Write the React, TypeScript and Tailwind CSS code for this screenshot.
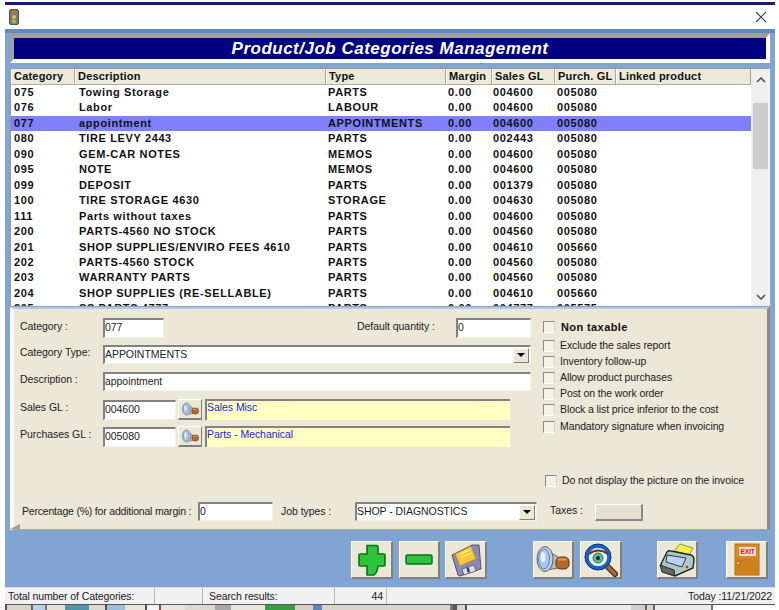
import React from "react";

const ROWS = [
  ["075", "Towing Storage", "PARTS", "0.00", "004600", "005080"],
  ["076", "Labor", "LABOUR", "0.00", "004600", "005080"],
  ["077", "appointment", "APPOINTMENTS", "0.00", "004600", "005080"],
  ["080", "TIRE LEVY 2443", "PARTS", "0.00", "002443", "005080"],
  ["090", "GEM-CAR NOTES", "MEMOS", "0.00", "004600", "005080"],
  ["095", "NOTE", "MEMOS", "0.00", "004600", "005080"],
  ["099", "DEPOSIT", "PARTS", "0.00", "001379", "005080"],
  ["100", "TIRE STORAGE 4630", "STORAGE", "0.00", "004630", "005080"],
  ["111", "Parts without taxes", "PARTS", "0.00", "004600", "005080"],
  ["200", "PARTS-4560 NO STOCK", "PARTS", "0.00", "004560", "005080"],
  ["201", "SHOP SUPPLIES/ENVIRO FEES 4610", "PARTS", "0.00", "004610", "005660"],
  ["202", "PARTS-4560 STOCK", "PARTS", "0.00", "004560", "005080"],
  ["203", "WARRANTY PARTS", "PARTS", "0.00", "004560", "005080"],
  ["204", "SHOP SUPPLIES (RE-SELLABLE)", "PARTS", "0.00", "004610", "005660"],
  ["205", "SS PARTS 4777", "PARTS", "0.00", "004777", "005575"],
];

const HEADERS: [string, string][] = [
  ["Category", "w-[64px]"],
  ["Description", "w-[251px]"],
  ["Type", "w-[120px]"],
  ["Margin", "w-[46px]"],
  ["Sales GL", "w-[63px]"],
  ["Purch. GL", "w-[61px]"],
  ["Linked product", "flex-1"],
];
const CELLS = ["w-[64px] pl-[3px]", "w-[251px] pl-[4px]", "w-[120px] pl-[2px]", "w-[46px] pl-[2px]", "w-[63px] pl-[1px]", "w-[61px] pl-[2px]"];

const STRIP: [string, string][] = [
  ["w-[5px]", "bg-[#f4f4f4]"],
  ["w-[2px]", "bg-[#555]"],
  ["w-[24px]", "bg-[#d8d5c8]"],
  ["w-[2px]", "bg-[#666]"],
  ["w-[12px]", "bg-[#b8d0e8]"],
  ["w-[2px]", "bg-[#777]"],
  ["w-[18px]", "bg-[#e4e1d4]"],
  ["w-[24px]", "bg-[#4f95a8]"],
  ["w-[16px]", "bg-[#dcdad0]"],
  ["w-[2px]", "bg-[#555]"],
  ["w-[18px]", "bg-[#9cc0dc]"],
  ["w-[20px]", "bg-[#e8e6da]"],
  ["w-[2px]", "bg-[#555]"],
  ["w-[12px]", "bg-[#f0f2f6]"],
  ["w-[2px]", "bg-[#a04050]"],
  ["w-[24px]", "bg-[#e8e6da]"],
  ["w-[30px]", "bg-[#dcdad0]"],
  ["w-[16px]", "bg-[#a8a8a8]"],
  ["w-[34px]", "bg-[#e8e6da]"],
  ["w-[30px]", "bg-[#35a040]"],
  ["w-[18px]", "bg-[#d4d2c6]"],
  ["w-[9px]", "bg-[#5f85b8]"],
  ["w-[128px]", "bg-[#d8d6ca]"],
  ["w-[3px]", "bg-[#777]"],
  ["w-[4px]", "bg-[#555]"],
  ["w-[8px]", "bg-[#d8d6ca]"],
  ["w-[2px]", "bg-[#555]"],
  ["w-[164px]", "bg-[#ebebeb]"],
  ["w-[14px]", "bg-[#cfcfcf]"],
  ["w-[2px]", "bg-[#666]"],
  ["w-[6px]", "bg-[#d8d6ca]"],
  ["w-[2px]", "bg-[#666]"],
  ["w-[56px]", "bg-[#ebebeb]"],
  ["w-[2px]", "bg-[#777]"],
];

function Flashlight({ size = 34 }: { size?: number }) {
  return (
    <svg width={size} height={size} viewBox="0 0 34 34">
      <path d="M11 7 L22 14 L22 25 L11 27 Z" fill="#b4b8c0" stroke="#666" strokeWidth="1" />
      <rect x="20" y="14" width="13" height="12" rx="4.5" fill="#b5682e" stroke="#5a3414" strokeWidth="1" />
      <path d="M22 16.5 h8" stroke="#dd9a5e" strokeWidth="2" />
      <ellipse cx="9" cy="16" rx="8" ry="12.5" fill="#c6cbd6" stroke="#666" strokeWidth="1" />
      <ellipse cx="8" cy="16" rx="5.5" ry="10" fill="#a8c6f4" stroke="#5a80cc" strokeWidth="1" />
      <ellipse cx="7" cy="14" rx="2.4" ry="5" fill="#e8f2ff" />
    </svg>
  );
}

function Plus() {
  return (
    <svg width="28" height="32" viewBox="0 0 28 32">
      <path d="M9 1.5 H19 Q20 1.5 20 2.5 V10 H26 Q27 10 27 11 V21 Q27 22 26 22 H20 Q19.5 28 16 31 H9 V22 H2 Q1 22 1 21 V11 Q1 10 2 10 H9 Z" fill="#2fc53a" stroke="#0b6f1b" strokeWidth="1.6" />
    </svg>
  );
}

function Minus() {
  return (
    <svg width="28" height="12" viewBox="0 0 28 12">
      <rect x="1" y="1" width="26" height="9" rx="1.5" fill="#2fc53a" stroke="#0b6f1b" strokeWidth="1.5" />
    </svg>
  );
}

function Floppy() {
  return (
    <svg width="32" height="34" viewBox="0 0 32 34">
      <path d="M2 12 L22 2 L29 2 L31 26 L10 33 L8 32 Z" fill="#8a8ab4" stroke="#50507a" strokeWidth="1" />
      <path d="M5 11 L21 3 L26 16 L10 23 Z" fill="#f5c93a" stroke="#b58a14" strokeWidth="0.8" />
      <path d="M10 11 L20 7 M11 14 L22 10" stroke="#fff2a8" strokeWidth="1.3" />
      <path d="M12 26 L24 22 L26 28 L14 32 Z" fill="#dcdcee" stroke="#55557a" strokeWidth="0.8" />
      <rect x="17" y="24.5" width="2.5" height="5" fill="#3c3c60" transform="rotate(-15 18 27)" />
    </svg>
  );
}

function EyeGlass() {
  return (
    <svg width="34" height="34" viewBox="0 0 34 34">
      <path d="M23 23 L31 31" stroke="#4a2a10" strokeWidth="6" strokeLinecap="round" />
      <path d="M23 23 L31 31" stroke="#a8683a" strokeWidth="3.4" strokeLinecap="round" />
      <circle cx="14" cy="14" r="13" fill="#1565d0" stroke="#0b2c6a" strokeWidth="1" />
      <circle cx="14" cy="14" r="9.8" fill="#e6eef0" stroke="#0d3d8e" strokeWidth="0.8" />
      <circle cx="14" cy="15" r="5" fill="#5dbb8a" stroke="#24604a" strokeWidth="0.8" />
      <circle cx="14" cy="15" r="2" fill="#123" />
      <path d="M5 11 Q14 4 24 11" fill="none" stroke="#5d3a20" strokeWidth="2" />
    </svg>
  );
}

function Printer() {
  return (
    <svg width="36" height="34" viewBox="0 0 36 34">
      <path d="M15 8 L21 1 L34 5 L30 12 Z" fill="#f6ec50" stroke="#7a7a20" strokeWidth="0.8" />
      <path d="M2 21 L8 9 Q9 7 12 8 L32 12 Q35 13 35 17 L34 25 L16 33 L5 29 Z" fill="#aec8c4" stroke="#1e2a2a" strokeWidth="1.4" />
      <path d="M8 12 L27 15 L23 24 L7 19 Z" fill="#bcd0f4" stroke="#2b3a50" strokeWidth="1" />
      <path d="M1 22 L15 27 L16 33 L3 29 Z" fill="#5d6968" stroke="#1e2a2a" strokeWidth="1" />
      <circle cx="28" cy="24" r="1.2" fill="#d22" />
    </svg>
  );
}

function ExitDoor() {
  return (
    <svg width="26" height="33" viewBox="0 0 26 33">
      <rect x="1" y="1" width="24" height="31" fill="#d98a22" stroke="#b06c18" strokeWidth="1" />
      <rect x="2" y="15" width="22" height="16" fill="#cc801e" />
      <rect x="5" y="4" width="17" height="9" rx="1" fill="#f3d9d4" />
      <text x="13.5" y="11" textAnchor="middle" fontSize="6.5" fontWeight="700" fill="#d01818" fontFamily="Liberation Sans, sans-serif">EXIT</text>
      <circle cx="4" cy="20" r="2" fill="#e8b060" stroke="#8a5412" strokeWidth="0.6" />
    </svg>
  );
}

function Traffic() {
  return (
    <svg width="10" height="16" viewBox="0 0 10 16">
      <rect x="0.5" y="0.5" width="9" height="15" rx="1.5" fill="#7d7a68" stroke="#55534a" />
      <circle cx="5" cy="3.4" r="2" fill="#d86a50" />
      <circle cx="5" cy="8" r="2" fill="#d9c060" />
      <circle cx="5" cy="12.6" r="2" fill="#8cc860" />
    </svg>
  );
}

function Big({ w, ml, children }: { w: string; ml: string; children: React.ReactNode }) {
  return (
    <div className={`${w} ${ml} h-[38px] flex items-center justify-center bg-[#ebe8d8] border-t border-l border-t-white border-l-white border-b-2 border-r-2 border-b-[#7f7f7f] border-r-[#7f7f7f]`}>
      {children}
    </div>
  );
}

function Check({ label, bold }: { label: string; bold?: boolean }) {
  return (
    <div className={bold ? "flex items-center h-[18px]" : "flex items-center h-[16.2px]"}>
      <div className="w-[12px] h-[12px] shrink-0 bg-[#f4f2e8] border-t border-l border-[#8a8a8a] border-r border-r-[#d8d5c5] border-b border-b-white" />
      {bold ? (
        <span className="ml-[6px] font-bold text-[11px] tracking-[0.4px] text-[#111]">{label}</span>
      ) : (
        <span className="ml-[5px] tracking-[-0.1px]">{label}</span>
      )}
    </div>
  );
}

const inputCls = "bg-white border-t-2 border-l-2 border-t-[#828282] border-l-[#828282] border-r border-b border-r-[#f3f1e6] border-b-[#f3f1e6] flex items-center";

function Lookup() {
  return (
    <div className="w-[24px] h-[21px] ml-[2px] flex items-center justify-center bg-[#ebe8d8] border-t border-l border-white border-b-2 border-r border-b-[#7f7f7f] border-r-[#7f7f7f]">
      <Flashlight size={17} />
    </div>
  );
}

function Arrow() {
  return (
    <div className="w-[16px] h-[15px] flex items-center justify-center bg-[#ebe8d8] border-t border-l border-white border-b border-r border-b-[#7f7f7f] border-r-[#7f7f7f]">
      <div className="w-0 h-0 border-l-[4px] border-r-[4px] border-t-[4px] border-l-transparent border-r-transparent border-t-black" />
    </div>
  );
}

function GlRow({ label, code, name, mt }: { label: string; code: string; name: string; mt: string }) {
  return (
    <div className={`flex items-center h-[21px] ${mt}`}>
      <span className="w-[83px] shrink-0 pb-[3px]">{label}</span>
      <div className={`${inputCls} w-[73px] h-[20px] pb-[1px]`}>{code}</div>
      <Lookup />
      <div className="w-[305px] h-[21px] ml-[3px] bg-[#ffffc4] border-t-2 border-l-2 border-t-[#828282] border-l-[#828282] text-[#1a1ae0] leading-[13px]">{name}</div>
    </div>
  );
}

export default function App() {
  return (
    <div className="w-[779px] h-[610px] bg-white overflow-hidden flex flex-col text-[10.5px] text-[#222] tracking-[-0.05px]" style={{ fontFamily: '"Liberation Sans", Arial, sans-serif' }}>
      <div className="h-[2px] shrink-0" />
      <div className="h-[3px] shrink-0 ml-[5px] mr-[4px] bg-[#1a1a78]" />
      <div className="h-[24px] shrink-0 flex items-center justify-between pl-[9px] pr-[12px]">
        <Traffic />
        <svg width="12" height="12" viewBox="0 0 12 12"><path d="M1 1 L11 11 M11 1 L1 11" stroke="#444" strokeWidth="1.1" /></svg>
      </div>

      <div className="ml-[5px] mr-[4px] h-[576px] shrink-0 flex flex-col bg-[#82a4d2] border-t-4 border-t-[#5f8bbd]">
        <div className="mx-[5px] h-[30px] shrink-0 flex bg-[#000080] border-t-[5px] border-l-4 border-b-[4px] border-r-4 border-t-[#a0a0a0] border-l-[#a0a0a0] border-b-white border-r-white">
          <div className="flex-1 text-center text-white font-bold italic text-[17px] leading-[21px] tracking-[0.5px]">Product/Job Categories Management</div>
        </div>

        <div className="mx-[5px] mt-[5px] h-[238px] shrink-0 flex bg-white border-t border-l border-[#9a9a9a] overflow-hidden font-bold text-[11px] text-[#111] tracking-[0.62px]">
          <div className="w-[740px] shrink-0 flex flex-col overflow-hidden">
            <div className="flex shrink-0 h-[16px] bg-[#ece9d8] border-b border-b-[#b0b0a8] tracking-[0.2px] leading-[15px]">
              {HEADERS.map(([h, w]) => (
                <div key={h} className={`${w} pl-[2px] border-r border-r-[#a8a8a0] border-l border-l-white whitespace-nowrap`}>{h}</div>
              ))}
            </div>
            {ROWS.map((r) => (
              <div key={r[0]} className={`flex shrink-0 h-[15.46px] leading-[15px] whitespace-nowrap ${r[0] === "077" ? "bg-[#8080ff]" : ""}`}>
                {r.map((c, i) => (
                  <div key={i} className={CELLS[i]}>{c}</div>
                ))}
              </div>
            ))}
          </div>
          <div className="flex-1 flex flex-col items-center bg-[#f0f0f0]">
            <svg className="mt-[8px]" width="10" height="6" viewBox="0 0 10 6"><path d="M1 5 L5 1 L9 5" fill="none" stroke="#555" strokeWidth="1.6" /></svg>
            <div className="w-[15px] h-[66px] mt-[20px] bg-[#cdcdcd]" />
            <svg className="mt-auto mb-[6px]" width="10" height="6" viewBox="0 0 10 6"><path d="M1 1 L5 5 L9 1" fill="none" stroke="#555" strokeWidth="1.6" /></svg>
          </div>
        </div>

        <div className="mx-[5px] mt-[1px] h-[223px] shrink-0 relative flex flex-col bg-[#ebe8d8] border-t-2 border-t-[#b4c8e2] border-l-4 border-l-white border-r-[3px] border-r-[#8a8a8a] border-b border-b-[#a8a698] pl-[6px]">
          <div className="flex mt-[9px]">
            <div className="w-[511px] shrink-0 flex flex-col">
              <div className="flex items-center h-[20px]">
                <span className="w-[83px] shrink-0 pb-[2px]">Category :</span>
                <div className={`${inputCls} w-[61px] h-[20px] pb-[1px]`}>077</div>
                <span className="ml-[193px] w-[99px] shrink-0 pb-[2px]">Default quantity :</span>
                <div className={`${inputCls} w-[75px] h-[20px] pb-[1px]`}>0</div>
              </div>
              <div className="flex items-center h-[19px] mt-[7px]">
                <span className="w-[83px] shrink-0 pb-[3px]">Category Type:</span>
                <div className={`${inputCls} w-[428px] h-[19px] justify-between pr-[1px]`}>
                  APPOINTMENTS
                  <Arrow />
                </div>
              </div>
              <div className="flex items-center h-[19px] mt-[8px]">
                <span className="w-[83px] shrink-0 pb-[3px]">Description :</span>
                <div className={`${inputCls} w-[428px] h-[19px] pb-[1px]`}>appointment</div>
              </div>
              <GlRow label="Sales GL :" code="004600" name="Sales Misc" mt="mt-[8px]" />
              <GlRow label="Purchases GL :" code="005080" name="Parts - Mechanical" mt="mt-[6px]" />
            </div>
            <div className="ml-[12px] flex flex-col">
              <Check label="Non taxable" bold />
              <div className="h-[1.5px]" />
              <Check label="Exclude the sales report" />
              <Check label="Inventory follow-up" />
              <Check label="Allow product purchases" />
              <Check label="Post on the work order" />
              <Check label="Block a list price inferior to the cost" />
              <Check label="Mandatory signature when invoicing" />
            </div>
          </div>
          <div className="flex mt-[26px] ml-[525px]">
            <Check label="Do not display the picture on the invoice" />
          </div>
          <div className="flex items-center h-[19px] mt-[13px] ml-[2px]">
            <span className="w-[176px] shrink-0 tracking-[-0.2px]">Percentage (%) for additional margin :</span>
            <div className={`${inputCls} w-[75px] h-[19px]`}>0</div>
            <span className="ml-[8px] w-[74px] shrink-0">Job types :</span>
            <div className={`${inputCls} w-[182px] h-[19px] justify-between pr-[1px]`}>
              SHOP - DIAGNOSTICS
              <Arrow />
            </div>
            <span className="ml-[13px] w-[45px] shrink-0 pb-[1px]">Taxes :</span>
            <div className="w-[48px] h-[17px] mt-[2px] bg-[#e4e1d0] border-t border-l border-white border-r-2 border-b-2 border-r-[#8a8a8a] border-b-[#8a8a8a]" />
          </div>
          <div className="absolute left-[-4px] bottom-0 w-0 h-0 border-l-[10px] border-l-transparent border-b-[5px] border-b-[#a0a0a0]" />
        </div>

        <div className="flex-1 flex items-start pt-[11px] ml-[346px]">
          <Big w="w-[42px]" ml=""><Plus /></Big>
          <Big w="w-[41px]" ml="ml-[6px]"><Minus /></Big>
          <Big w="w-[42px]" ml="ml-[5px]"><Floppy /></Big>
          <Big w="w-[41px]" ml="ml-[46px]"><Flashlight /></Big>
          <Big w="w-[42px]" ml="ml-[6px]"><EyeGlass /></Big>
          <Big w="w-[41px]" ml="ml-[35px]"><Printer /></Big>
          <Big w="w-[42px]" ml="ml-[28px]"><ExitDoor /></Big>
        </div>

        <div className="h-[18px] shrink-0 flex bg-[#f0f0f0] border-t border-t-[#d8dde4] border-b border-b-[#555] leading-[16px] tracking-[-0.1px]">
          <div className="w-[150px] pl-[3px] border-r border-r-[#b8b8b8]">Total number of Categories:</div>
          <div className="w-[48px] border-r border-r-[#b8b8b8]" />
          <div className="w-[130px] pl-[3px] ml-[2px] border-l border-l-white border-r border-r-[#b8b8b8]">Search results:</div>
          <div className="w-[50px] pr-[3px] ml-[2px] text-right border-r border-r-[#b8b8b8]">44</div>
          <div className="flex-1 ml-[2px] text-right pr-[3px]">Today :11/21/2022</div>
        </div>
      </div>

      <div className="flex-1 flex overflow-hidden">
        {STRIP.map(([w, c], i) => (
          <div key={i} className={`${w} ${c} shrink-0`} />
        ))}
      </div>
    </div>
  );
}
